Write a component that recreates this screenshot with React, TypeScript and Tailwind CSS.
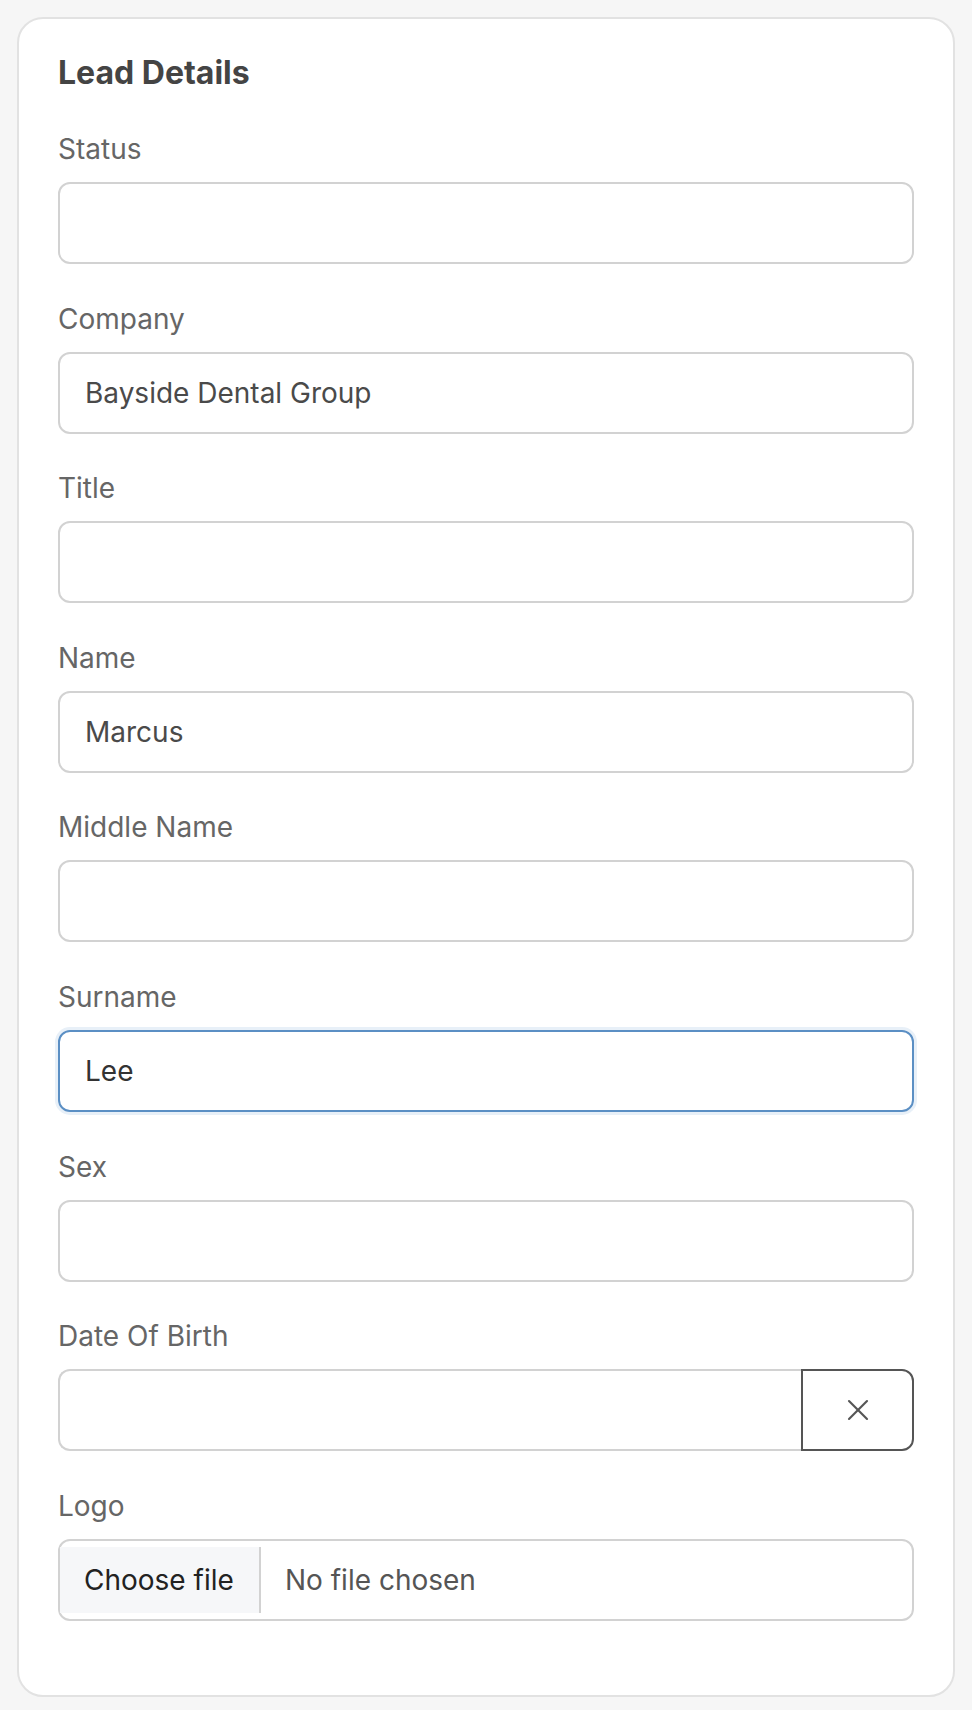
import { X } from "lucide-react";

type Field = {
  label: string;
  value?: string;
  focused?: boolean;
};

const fields: Field[] = [
  { label: "Status" },
  { label: "Company", value: "Bayside Dental Group" },
  { label: "Title" },
  { label: "Name", value: "Marcus" },
  { label: "Middle Name" },
  { label: "Surname", value: "Lee", focused: true },
  { label: "Sex" },
];

function TextInput({ field }: { field: Field }) {
  return (
    <div
      className={`h-[82px] rounded-[12px] border-2 flex items-center px-[25px] text-[28px] ${
        field.focused
          ? "border-[#5b8fc4] text-[#333] shadow-[0_0_0_3px_#e8f0f8]"
          : "border-[#d2d2d2] text-[#4a4a4a]"
      }`}
    >
      {field.value}
    </div>
  );
}

export default function App() {
  return (
    <div
      className="min-h-[1710px] bg-[#f6f6f6] p-[17px]"
      style={{ fontFamily: "Inter, 'Noto Sans', sans-serif" }}
    >
      <div className="rounded-[26px] border-2 border-[#e2e2e2] bg-white px-[39px] pt-[34px] pb-[74px]">
        <h2 className="text-[32px] leading-[40px] font-bold text-[#444] mb-[38px]">Lead Details</h2>
        <div className="flex flex-col gap-[36.6px]">
          {fields.map((f) => (
            <div key={f.label} className="flex flex-col gap-[15px]">
              <label className="text-[28px] leading-[36px] text-[#666]">{f.label}</label>
              <TextInput field={f} />
            </div>
          ))}
          <div className="flex flex-col gap-[15px]">
            <label className="text-[28px] leading-[36px] text-[#666]">Date Of Birth</label>
            <div className="flex h-[82px]">
              <div className="flex-1 rounded-l-[12px] border-2 border-r-0 border-[#d2d2d2]" />
              <button className="w-[113px] rounded-r-[12px] border-2 border-[#555] flex items-center justify-center text-[#555]">
                <X className="w-[36px] h-[36px]" strokeWidth={1.4} />
              </button>
            </div>
          </div>
          <div className="flex flex-col gap-[15px]">
            <label className="text-[28px] leading-[36px] text-[#666]">Logo</label>
            <div className="h-[82px] rounded-[12px] border-2 border-[#d2d2d2] flex items-center text-[28px]">
              <div className="h-[66px] w-[201px] bg-[#f6f7f9] border-r-2 border-[#d2d2d2] flex items-center pl-[24px] text-[#222]">
                Choose file
              </div>
              <span className="pl-[24px] text-[#555]">No file chosen</span>
            </div>
          </div>
        </div>
      </div>
    </div>
  );
}
